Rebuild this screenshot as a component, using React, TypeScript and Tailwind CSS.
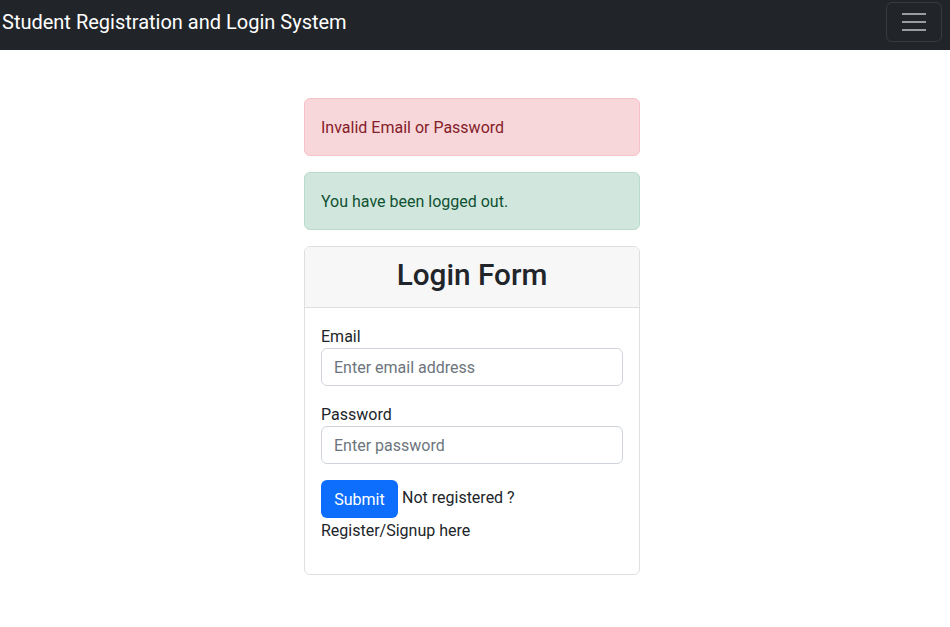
import React from "react";

export default function App() {
  return (
    <div className="min-h-[627px] bg-white text-[#212529]" style={{ fontFamily: "Roboto, 'Liberation Sans', Arial, sans-serif" }}>
      <nav className="h-[50px] bg-[#212529] flex items-start justify-between pl-[2px] pr-[8px]">
        <span className="text-white text-[20px] leading-[30px] mt-[7px]">Student Registration and Login System</span>
        <button className="mt-[2px] w-[56px] h-[40px] border border-[rgba(255,255,255,0.1)] rounded-[6px] flex flex-col items-center justify-center gap-[6px]">
          <span className="block w-[24px] h-[2px] bg-[rgba(255,255,255,0.55)]" />
          <span className="block w-[24px] h-[2px] bg-[rgba(255,255,255,0.55)]" />
          <span className="block w-[24px] h-[2px] bg-[rgba(255,255,255,0.55)]" />
        </button>
      </nav>
      <div className="flex justify-center pt-[48px] pr-[6px]">
        <div className="w-[336px]">
          <div className="h-[58px] border border-[#f5c2c7] bg-[#f8d7da] text-[#842029] rounded-[6px] px-4 pt-[17px] pb-[15px] text-[16px] leading-[24px] mb-4">
            Invalid Email or Password
          </div>
          <div className="h-[58px] border border-[#badbcc] bg-[#d1e7dd] text-[#0f5132] rounded-[6px] px-4 pt-[17px] pb-[15px] text-[16px] leading-[24px] mb-4">
            You have been logged out.
          </div>
          <div className="border border-[#dfdfdf] rounded-[6px] overflow-hidden">
            <div className="bg-[#f7f7f7] border-b border-[#dfdfdf] h-[61px] flex items-center justify-center">
              <h2 className="text-[29.75px] font-medium leading-[36px] pb-[4px]">Login Form</h2>
            </div>
            <div className="p-4 pb-[31px] text-[16px] leading-[24px]">
              <label className="block h-[24px] pt-[1px]">Email</label>
              <input className="block w-full h-[38px] border border-[#ced4da] rounded-[6px] px-3 pt-[1px] placeholder:text-[#6c757d] outline-none" placeholder="Enter email address" />
              <label className="block h-[24px] pt-[1px] mt-4">Password</label>
              <input type="password" className="block w-full h-[38px] border border-[#ced4da] rounded-[6px] px-3 pt-[1px] placeholder:text-[#6c757d] outline-none" placeholder="Enter password" />
              <div className="mt-4">
                <button className="inline-block w-[77px] h-[38px] bg-[#0d6efd] text-white rounded-[6px] pt-[2px] align-baseline">Submit</button>
                <span className="ml-[4px] relative top-[-2px]">Not registered ?</span>
                <div className="pt-[1px]">Register/Signup here</div>
              </div>
            </div>
          </div>
        </div>
      </div>
    </div>
  );
}
